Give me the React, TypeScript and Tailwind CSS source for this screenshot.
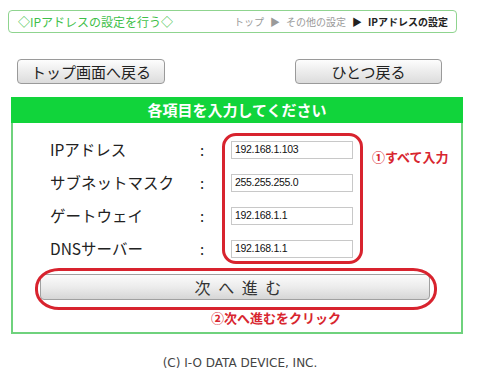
import React from "react";

const jp = "font-['Meiryo','Noto_Sans_CJK_JP',sans-serif]";

const rows = [
  { label: "IPアドレス", value: "192.168.1.103" },
  { label: "サブネットマスク", value: "255.255.255.0" },
  { label: "ゲートウェイ", value: "192.168.1.1" },
  { label: "DNSサーバー", value: "192.168.1.1" },
];

export default function App() {
  return (
    <div className={`relative h-[376px] w-[480px] overflow-hidden bg-white ${jp}`}>
      {/* title bar */}
      <div className="ml-[8px] mt-[10px] flex h-[23px] w-[449px] items-center justify-between rounded-[4px] border border-[#8fd48f] pl-[9px] pr-[8px]">
        <span className="text-[12px] leading-none text-[#3fbf4a]">◇IPアドレスの設定を行う◇</span>
        <span className="flex items-center gap-[6px] text-[10px] leading-none text-[#9a9a9a]">
          <span>トップ</span>
          <span>▶</span>
          <span>その他の設定</span>
          <span className="font-bold text-[#222]">▶</span>
          <span className="font-bold text-[#222]">IPアドレスの設定</span>
        </span>
      </div>

      {/* nav buttons */}
      <div className="ml-[17px] mt-[26px] flex w-[425px] justify-between">
        <button className="flex h-[25px] w-[148px] items-center justify-center rounded-[4px] border border-[#9a9a9a] bg-gradient-to-b from-[#fdfdfd] to-[#dcdcdc] text-[15px] leading-none text-[#222]">
          トップ画面へ戻る
        </button>
        <button className="flex h-[25px] w-[147px] items-center justify-center rounded-[4px] border border-[#9a9a9a] bg-gradient-to-b from-[#fdfdfd] to-[#dcdcdc] text-[15px] leading-none text-[#222]">
          ひとつ戻る
        </button>
      </div>

      {/* form panel */}
      <div className="ml-[11px] mt-[13px] h-[237px] w-[452px] border-2 border-[#6fd27d]">
        <div className="-mx-[2px] -mt-[2px] flex h-[26px] items-center justify-center bg-[#11d43b] text-[15px] font-bold text-white">
          各項目を入力してください
        </div>
        <div className="mt-[10px]">
          {rows.map((r) => (
            <div key={r.label} className="flex h-[33px] items-center">
              <span className="ml-[37px] w-[150px] text-[15.5px] leading-none text-[#222]">{r.label}</span>
              <span className="w-[31px] text-[15px] leading-none text-[#222]">:</span>
              <div className="flex h-[18px] w-[122px] items-center border border-[#c8c8c8] bg-white pl-[3px] font-['Liberation_Sans',sans-serif] text-[10.5px] tracking-[-0.3px] text-[#111]">
                {r.value}
              </div>
            </div>
          ))}
        </div>
        <button className="ml-[27px] mt-[9px] flex h-[26px] w-[390px] items-center justify-center rounded-[4px] border border-[#a0a0a0] bg-gradient-to-b from-[#fbfbfb] via-[#ececec] to-[#d6d6d6] pl-[8px] text-[16px] leading-none tracking-[2px] text-[#333]">
          次 へ 進 む
        </button>
        <div className="mt-[11px] pl-[198px] text-[13px] font-bold leading-none text-[#d8262f]">
          ②次へ進むをクリック
        </div>
      </div>

      <div className="mt-[20px] text-center font-['DejaVu_Sans',sans-serif] text-[12px] text-[#444]">
        (C) I-O DATA DEVICE, INC.
      </div>

      {/* annotations */}
      <div className="pointer-events-none absolute left-[222px] top-[133px] h-[131px] w-[141px] rounded-[14px] border-[3px] border-[#d8232e]" />
      <div className="absolute left-[372px] top-[150px] text-[13px] font-bold leading-none text-[#d8262f]">①すべて入力</div>
      <div className="pointer-events-none absolute left-[35px] top-[268px] h-[42px] w-[402px] rounded-[24px/20px] border-[3px] border-[#d8232e]" />
    </div>
  );
}
